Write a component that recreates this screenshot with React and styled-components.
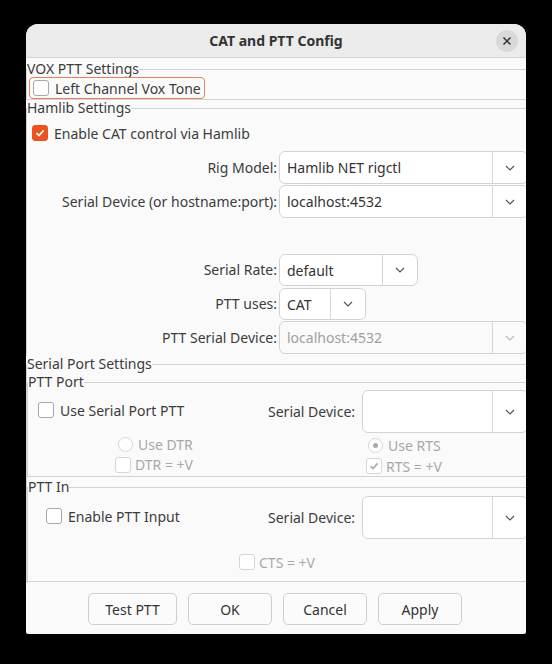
import React from "react";
import styled, { createGlobalStyle } from "styled-components";

const G = createGlobalStyle`
  html,body{margin:0;background:#000;}
  body{font-family:"Noto Sans","Open Sans",sans-serif;font-size:14px;color:#3c3c3c;}
`;
const Page = styled.div`width:552px;height:664px;padding:24px 26px 0;box-sizing:border-box;`;
const Dialog = styled.div`width:500px;height:610px;background:#fafafa;border-radius:12px 12px 2px 2px;overflow:hidden;display:flex;flex-direction:column;`;
const Title = styled.div`height:34px;flex:none;background:#ebebeb;border-bottom:1px solid #d6d6d6;box-sizing:border-box;display:flex;align-items:center;justify-content:center;font-weight:bold;font-size:14px;color:#333;position:relative;`;
const Close = styled.div`position:absolute;right:8px;top:6px;width:22px;height:22px;border-radius:50%;background:#d9d9d9;display:flex;align-items:center;justify-content:center;`;
const Body = styled.div`width:502px;display:flex;flex-direction:column;padding-top:3px;`;
const Set = styled.fieldset`margin:0;padding:0;border:1px solid #d2d2d2;border-right:none;min-width:0;height:${p=>p.h}px;box-sizing:border-box;`;
const Legend = styled.legend`padding:0;font-size:14px;line-height:16px;height:16px;color:#3c3c3c;`;
const Row = styled.div`display:flex;align-items:center;height:${p=>p.h||22}px;padding-left:${p=>p.pl||0}px;margin-top:${p=>p.mt||0}px;`;
const Focus = styled.div`display:flex;align-items:center;gap:6px;border:1px solid #e9825a;border-radius:4px;height:20px;padding:0 3px 0 3px;margin-left:2px;`;
const Box = styled.span`width:16px;height:16px;box-sizing:border-box;border-radius:3px;flex:none;display:inline-flex;align-items:center;justify-content:center;
  border:1px solid ${p=>p.on?"#e95420":p.dis?"#d6d6d6":"#a8a8a8"};background:${p=>p.on?"#e95420":"#fff"};`;
const Lbl = styled.span`color:${p=>p.dis?"#a8a8a8":"#3c3c3c"};white-space:nowrap;`;
const Check = ({on,dis,mark,children,gap=6})=>(
  <span style={{display:"inline-flex",alignItems:"center",gap}}>
    <Box on={on} dis={dis}>{(on||mark)&&<svg width="12" height="12" viewBox="0 0 12 12"><path d="M2.5 6.2 5 8.6 9.6 3.4" fill="none" stroke={on?"#fff":"#aaa"} strokeWidth="1.6"/></svg>}</Box>
    <Lbl dis={dis}>{children}</Lbl>
  </span>);
const Radio = ({on,children})=>(
  <span style={{display:"inline-flex",alignItems:"center",gap:5}}>
    <span style={{width:15,height:15,borderRadius:"50%",border:"1px solid #d6d6d6",boxSizing:"border-box",display:"inline-flex",alignItems:"center",justifyContent:"center",background:"#fff"}}>{on&&<span style={{width:5,height:5,borderRadius:"50%",background:"#aaa"}}/>}</span>
    <Lbl dis>{children}</Lbl>
  </span>);
const Grid = styled.div`display:grid;grid-template-columns:250px auto;column-gap:2px;align-items:center;`;
const FLabel = styled.div`text-align:right;height:${p=>p.h||33}px;line-height:${p=>p.h||33}px;margin-top:${p=>p.mt||0}px;white-space:nowrap;color:${p=>p.dis?"#555":"#3c3c3c"};`;
const ComboBox = styled.div`display:flex;width:${p=>p.w}px;height:${p=>p.h||33}px;margin-top:${p=>p.mt||0}px;box-sizing:border-box;border:1px solid #d3d3d3;border-radius:6px;background:${p=>p.dis?"#fafafa":"#fff"};`;
const CText = styled.div`flex:1;display:flex;align-items:center;padding-left:7px;color:${p=>p.dis?"#a0a0a0":"#333"};`;
const Arrow = styled.div`width:34px;border-left:1px solid #d6d6d6;display:flex;align-items:center;justify-content:center;`;
const Combo = ({w,h,mt,dis,children})=>(
  <ComboBox w={w} h={h} mt={mt} dis={dis}><CText dis={dis}>{children}</CText>
    <Arrow><svg width="12" height="8" viewBox="0 0 12 8"><path d="M2 2l4 4 4-4" fill="none" stroke={dis?"#bbb":"#555"} strokeWidth="1.2"/></svg></Arrow></ComboBox>);
const Buttons = styled.div`display:flex;gap:11px;padding:11px 0 0 62px;`;
const Btn = styled.div`width:${p=>p.w}px;height:32px;box-sizing:border-box;border:1px solid #cfcfcf;border-radius:5px;background:#fbfbfb;display:flex;align-items:center;justify-content:center;color:#333;`;
const Col = styled.div`position:relative;`;

export default function App(){
  return <><G/><Page><Dialog>
    <Title>CAT and PTT Config<Close><svg width="10" height="10" viewBox="0 0 10 10"><path d="M1.5 1.5l7 7M8.5 1.5l-7 7" stroke="#333" strokeWidth="1.5"/></svg></Close></Title>
    <Body>
      <Set h={39}><Legend>VOX PTT Settings</Legend>
        <Row h={22}><Focus><Check>Left Channel Vox Tone</Check></Focus></Row>
      </Set>
      <Set h={256} style={{borderBottom:"none"}}><Legend>Hamlib Settings</Legend>
        <Row pl={5} mt={6}><Check on>Enable CAT control via Hamlib</Check></Row>
        <Grid style={{marginTop:7}}>
          <FLabel>Rig Model:</FLabel><Combo w={249}>Hamlib NET rigctl</Combo>
          <FLabel mt={1}>Serial Device (or hostname:port):</FLabel><Combo w={249} mt={1}>localhost:4532</Combo>
          <FLabel h={32} mt={36}>Serial Rate:</FLabel><Combo w={139} h={32} mt={36}>default</Combo>
          <FLabel h={32} mt={2}>PTT uses:</FLabel><Combo w={87} h={32} mt={2}>CAT</Combo>
          <FLabel mt={1}>PTT Serial Device:</FLabel><Combo w={249} mt={1} dis>localhost:4532</Combo>
        </Grid>
      </Set>
      <Set h={226}><Legend>Serial Port Settings</Legend>
        <Set h={103} style={{borderBottom:"1px solid #d2d2d2",marginTop:2,borderTop:"1px solid #d2d2d2"}}><Legend>PTT Port</Legend>
          <Row h={43} pl={10}>
            <div style={{width:222}}><Check>Use Serial Port PTT</Check></div>
            <Lbl style={{width:97,textAlign:"right",marginRight:7}}>Serial Device:</Lbl>
            <Combo w={167} h={43}></Combo>
          </Row>
          <Row h={16} mt={4} pl={90}><div style={{width:250}}><Radio>Use DTR</Radio></div><Radio on>Use RTS</Radio></Row>
          <Row h={18} mt={4} pl={87}><div style={{width:251}}><Check dis gap={4}>DTR = +V</Check></div><Check dis mark gap={4}>RTS = +V</Check></Row>
        </Set>
        <Set h={104} style={{border:"none",borderTop:"1px solid #d2d2d2",borderLeft:"1px solid #d2d2d2",marginTop:2}}><Legend>PTT In</Legend>
          <Row h={43} mt={1} pl={18}>
            <div style={{width:214}}><Check>Enable PTT Input</Check></div>
            <Lbl style={{width:97,textAlign:"right",marginRight:7}}>Serial Device:</Lbl>
            <Combo w={167} h={43}></Combo>
          </Row>
          <Row h={18} mt={14} pl={211}><Check dis gap={4}>CTS = +V</Check></Row>
        </Set>
      </Set>
      <Buttons>
        <Btn w={89}>Test PTT</Btn><Btn w={84}>OK</Btn><Btn w={84}>Cancel</Btn><Btn w={84}>Apply</Btn>
      </Buttons>
    </Body>
  </Dialog></Page></>;
}
